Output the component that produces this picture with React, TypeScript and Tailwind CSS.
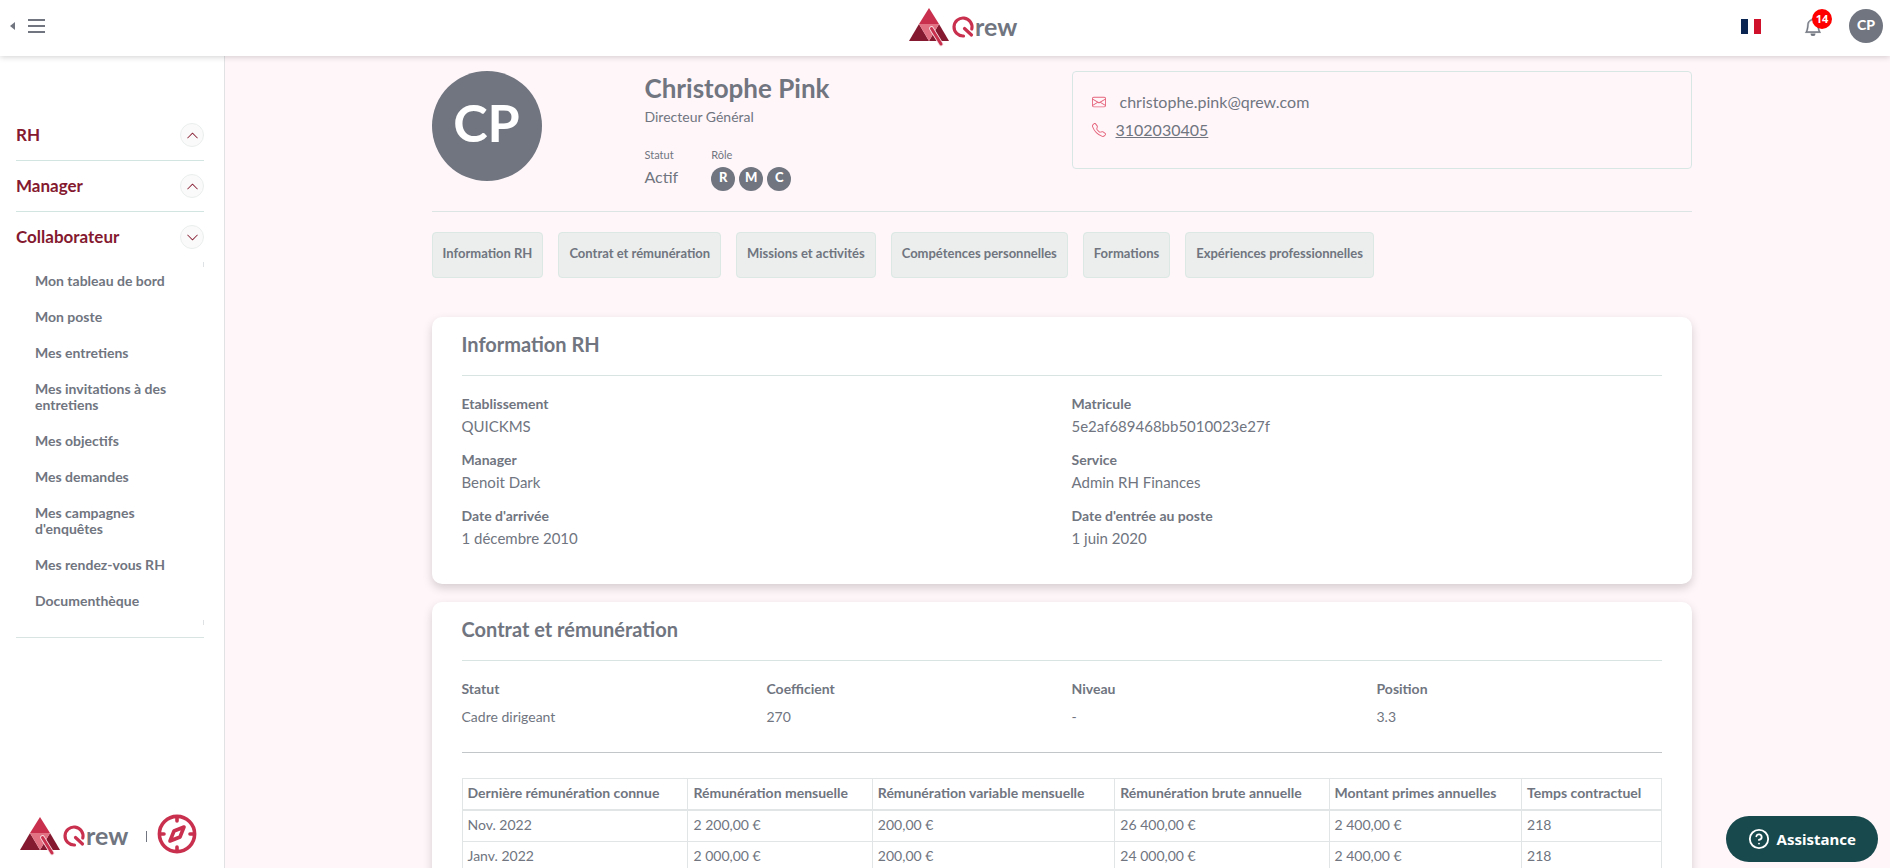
import React from "react";
import { BsChevronUp, BsChevronDown, BsEnvelope, BsTelephone, BsBell } from "react-icons/bs";
import { CircleHelp } from "lucide-react";

function Logo() {
  return (
    <svg width="110" height="40" viewBox="0 0 110 40" role="img" aria-label="Qrew">
      <polygon points="20,1 30,17 10,17" fill="#c9304e" />
      <polygon points="10,17 20,34 0,34" fill="#84192f" />
      <polygon points="30,17 40,34 20,34" fill="#84192f" />
      <polygon points="10,17 30,17 20,34" fill="#e27184" />
      <line x1="22.5" y1="21.5" x2="32" y2="37" stroke="#f6dfe3" strokeWidth="4.6" strokeLinecap="round" />
      <line x1="22.5" y1="21.5" x2="32" y2="37" stroke="#c9304e" strokeWidth="3" strokeLinecap="round" />
      <path d="M54.5 29A9 9 0 1 1 62.8 22" fill="none" stroke="#c9304e" strokeWidth="3.2" strokeLinecap="round" />
      <line x1="55.5" y1="21.5" x2="62.5" y2="28" stroke="#c9304e" strokeWidth="3.2" strokeLinecap="round" />
      <text x="66" y="29" fontSize="25" fill="#70757f" className="font-['Lato',sans-serif] font-bold">rew</text>
    </svg>
  );
}

function Compass() {
  return (
    <svg width="40" height="40" viewBox="0 0 40 40" fill="none" stroke="#c9304e" strokeWidth="3.6" aria-hidden="true">
      <circle cx="20" cy="20" r="17.6" />
      <path d="M20 3V7M20 33V37M3 20H7M33 20H37" strokeLinecap="round" />
      <path d="M27 13L23 23L13 27L17 17Z" strokeLinejoin="round" />
    </svg>
  );
}

const links = [
  "Mon tableau de bord",
  "Mon poste",
  "Mes entretiens",
  "Mes invitations à des entretiens",
  "Mes objectifs",
  "Mes demandes",
  "Mes campagnes d'enquêtes",
  "Mes rendez-vous RH",
  "Documenthèque",
];

const tabs = [
  "Information RH",
  "Contrat et rémunération",
  "Missions et activités",
  "Compétences personnelles",
  "Formations",
  "Expériences professionnelles",
];

const info = [
  ["Etablissement", "QUICKMS"],
  ["Matricule", "5e2af689468bb5010023e27f"],
  ["Manager", "Benoit Dark"],
  ["Service", "Admin RH Finances"],
  ["Date d'arrivée", "1 décembre 2010"],
  ["Date d'entrée au poste", "1 juin 2020"],
];

const contract = [
  ["Statut", "Cadre dirigeant"],
  ["Coefficient", "270"],
  ["Niveau", "-"],
  ["Position", "3.3"],
];

const columns = [
  "Dernière rémunération connue",
  "Rémunération mensuelle",
  "Rémunération variable mensuelle",
  "Rémunération brute annuelle",
  "Montant primes annuelles",
  "Temps contractuel",
];

const rows = [
  ["Nov. 2022", "2 200,00 €", "200,00 €", "26 400,00 €", "2 400,00 €", "218"],
  ["Janv. 2022", "2 000,00 €", "200,00 €", "24 000,00 €", "2 400,00 €", "218"],
];

function MenuSection({ label, open = false }: { label: string; open?: boolean }) {
  return (
    <button type="button" aria-expanded={open} className="flex h-[50px] w-full items-center justify-between text-left font-bold text-[#84192f]">
      <span className="text-[17px] leading-6">{label}</span>
      <span className="flex size-6 items-center justify-center rounded-full border border-[#ebeeee] bg-[#fafafa]">
        {open ? <BsChevronDown size={13} /> : <BsChevronUp size={13} />}
      </span>
    </button>
  );
}

function Card({ title, children }: { title: string; children: React.ReactNode }) {
  return (
    <section className="rounded-[10px] bg-white px-[30px] pt-[15px] shadow-[0_4px_10px_rgba(0,0,0,0.17)]">
      <h2 className="border-b border-[#d8e4e2] pb-[19px] text-xl leading-6 font-bold">{title}</h2>
      {children}
    </section>
  );
}

export default function App() {
  return (
    <div className="flex h-screen flex-col overflow-hidden bg-[#fff6fa] font-['Lato',sans-serif] text-[#70757f]">
      <header className="z-10 grid h-14 shrink-0 grid-cols-3 items-center bg-white pr-[7px] pb-1 pl-2 shadow-[0_1px_6px_rgba(0,0,0,0.18)]">
        <div className="flex items-center gap-3">
          <svg width="8" height="8" viewBox="0 0 8 8" aria-hidden="true">
            <path d="M7 0V8L2 4Z" fill="#70757f" />
          </svg>
          <button type="button" aria-label="Menu" className="flex w-[17px] flex-col gap-1">
            <span className="h-0.5 w-full bg-[#70757f]" />
            <span className="h-0.5 w-full bg-[#70757f]" />
            <span className="h-0.5 w-full bg-[#70757f]" />
          </button>
        </div>
        <div className="flex justify-center pt-0.5 pl-9">
          <Logo />
        </div>
        <div className="flex items-center justify-end">
          <button type="button" aria-label="Français" className="mr-[43px] flex h-[15px] w-5">
            <span className="h-full flex-1 bg-[#0a2552]" />
            <span className="h-full flex-1 bg-white" />
            <span className="h-full flex-1 bg-[#d0112b]" />
          </button>
          <button type="button" aria-label="Notifications" className="relative mr-[27px] pt-0.5">
            <BsBell size={18} strokeWidth={0.4} />
            <span className="absolute -top-[7px] left-2 flex size-5 items-center justify-center rounded-full bg-[#fe0000] font-['Open_Sans',sans-serif] text-[11px] leading-4 font-bold text-white">
              14
            </span>
          </button>
          <button type="button" className="flex size-[34px] items-center justify-center rounded-full bg-[#70757f] pb-0.5 text-sm font-black text-white">
            CP
          </button>
        </div>
      </header>

      <div className="flex min-h-0 flex-1">
        <aside className="flex w-[225px] shrink-0 flex-col justify-between border-r border-[#e0e2e3] bg-white pt-[54px] pr-5 pb-2.5 pl-4">
          <nav>
            <div className="border-b border-[#d3e5e0]"><MenuSection label="RH" /></div>
            <div className="border-b border-[#d3e5e0]"><MenuSection label="Manager" /></div>
            <MenuSection label="Collaborateur" open />
            <div className="flex flex-col border-b border-[#d8e4e2] pb-3">
              <span className="h-[5px] w-px self-end bg-[#dfe2e4]" />
              <ul className="flex flex-col gap-5 pt-1.5 pr-3 pb-[11px] pl-[19px] text-sm leading-4 font-bold">
                {links.map((l) => (
                  <li key={l}><a href="#">{l}</a></li>
                ))}
              </ul>
              <span className="h-[5px] w-px self-end bg-[#dfe2e4]" />
            </div>
          </nav>
          <div className="flex items-center pl-1">
            <Logo />
            <span className="ml-4 h-[11px] w-px bg-[#70757f]" />
            <a href="#" aria-label="Guide" className="mb-1 ml-2.5"><Compass /></a>
          </div>
        </aside>

        <main className="min-w-0 flex-1 overflow-y-auto pl-2 [scrollbar-width:none]">
          <div className="mx-auto max-w-[1260px] pt-[15px] pb-8">
            <div className="grid grid-cols-2 border-b border-[#dce5e4] pb-5">
              <div className="flex">
                <div className="flex size-[110px] items-center justify-center rounded-full bg-[#70757f] pb-2 text-[52px] font-bold text-white">
                  CP
                </div>
                <div className="ml-[103px]">
                  <h1 className="text-[26px] leading-[34px] font-bold">Christophe Pink</h1>
                  <p className="text-sm leading-6">Directeur Général</p>
                  <dl className="mt-[18px] flex gap-[33px]">
                    <div>
                      <dt className="text-[11px] leading-4">Statut</dt>
                      <dd className="pt-0.5 text-base leading-6">Actif</dd>
                    </div>
                    <div>
                      <dt className="text-[11px] leading-4">Rôle</dt>
                      <dd className="flex gap-1 pt-1">
                        {["R", "M", "C"].map((r) => (
                          <span key={r} className="flex size-6 items-center justify-center rounded-full bg-[#70757f] pb-1 text-[13px] leading-4 font-black text-white">{r}</span>
                        ))}
                      </dd>
                    </div>
                  </dl>
                </div>
              </div>
              <address className="ml-[10px] flex h-[98px] flex-col gap-1 rounded border border-[#d9e7e4] px-[19px] pt-[18px] not-italic">
                <div className="flex items-center gap-3.5">
                  <BsEnvelope size={14} className="text-[#e5647b]" />
                  <a href="mailto:christophe.pink@qrew.com" className="text-base leading-6">christophe.pink@qrew.com</a>
                </div>
                <div className="flex items-center gap-2.5">
                  <BsTelephone size={14} className="text-[#e5647b]" />
                  <a href="tel:3102030405" className="text-base leading-6 underline">3102030405</a>
                </div>
              </address>
            </div>

            <div className="mt-5 flex gap-[15px]">
              {tabs.map((t) => (
                <button type="button" key={t} className="h-[46px] rounded border border-[#dbe8e3] bg-[#ebeeed] px-2.5 pb-1 text-[13px] leading-4 font-bold">{t}</button>
              ))}
            </div>

            <div className="mt-[39px] flex flex-col gap-[18px]">
              <Card title="Information RH">
                <dl className="grid grid-cols-2 gap-x-5 gap-y-3 pt-[17px] pb-[35px]">
                  {info.map(([k, v]) => (
                    <div key={k}>
                      <dt className="text-sm leading-[22px] font-bold">{k}</dt>
                      <dd className="text-[15px] leading-[22px]">{v}</dd>
                    </div>
                  ))}
                </dl>
              </Card>
              <Card title="Contrat et rémunération">
                <dl className="grid grid-cols-4 gap-x-5 border-b border-[#c3c6c9] pt-[17px] pb-6">
                  {contract.map(([k, v]) => (
                    <div key={k}>
                      <dt className="text-sm leading-[22px] font-bold">{k}</dt>
                      <dd className="pt-1.5 text-sm leading-[22px]">{v}</dd>
                    </div>
                  ))}
                </dl>
                <div className="pt-[25px] pb-8">
                  <table className="w-full border-collapse text-left text-sm leading-5">
                    <thead>
                      <tr>
                        {columns.map((c) => (
                          <th key={c} className="border border-b-2 border-[#e2e5e6] px-[5px] pt-1 pb-1.5 font-bold whitespace-nowrap">{c}</th>
                        ))}
                      </tr>
                    </thead>
                    <tbody>
                      {rows.map((r) => (
                        <tr key={r[0]}>
                          {r.map((c, i) => (
                            <td key={i} className="border border-[#e2e5e6] px-[5px] pt-1 pb-1.5">{c}</td>
                          ))}
                        </tr>
                      ))}
                    </tbody>
                  </table>
                </div>
              </Card>
            </div>
          </div>
        </main>
      </div>

      <button type="button" className="fixed right-3 bottom-1.5 z-20 flex h-[46px] items-center gap-[7px] rounded-full bg-[#17494d] px-[22px] font-['Noto_Sans',sans-serif] text-[15px] leading-5 font-bold text-white">
        <CircleHelp size={22} />
        Assistance
      </button>
    </div>
  );
}
